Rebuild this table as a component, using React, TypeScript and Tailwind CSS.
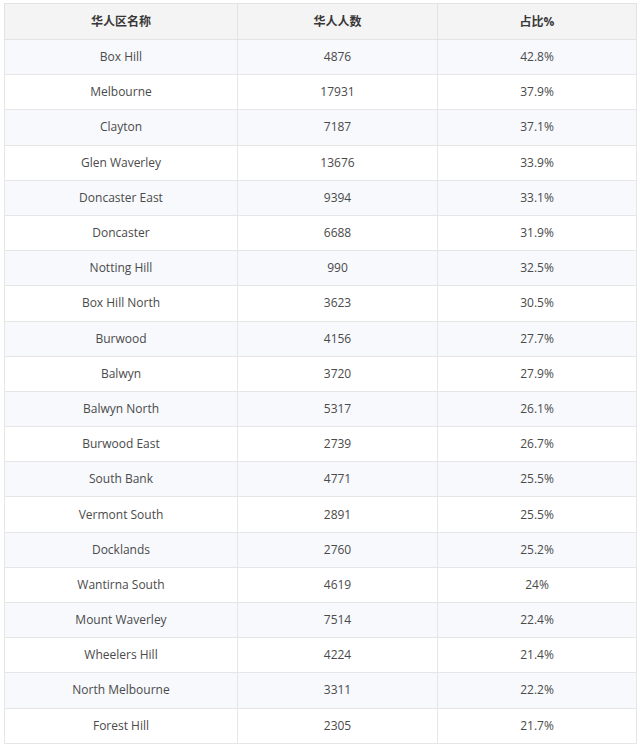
const rows: [string, string, string][] = [
  ['Box Hill', '4876', '42.8%'],
  ['Melbourne', '17931', '37.9%'],
  ['Clayton', '7187', '37.1%'],
  ['Glen Waverley', '13676', '33.9%'],
  ['Doncaster East', '9394', '33.1%'],
  ['Doncaster', '6688', '31.9%'],
  ['Notting Hill', '990', '32.5%'],
  ['Box Hill North', '3623', '30.5%'],
  ['Burwood', '4156', '27.7%'],
  ['Balwyn', '3720', '27.9%'],
  ['Balwyn North', '5317', '26.1%'],
  ['Burwood East', '2739', '26.7%'],
  ['South Bank', '4771', '25.5%'],
  ['Vermont South', '2891', '25.5%'],
  ['Docklands', '2760', '25.2%'],
  ['Wantirna South', '4619', '24%'],
  ['Mount Waverley', '7514', '22.4%'],
  ['Wheelers Hill', '4224', '21.4%'],
  ['North Melbourne', '3311', '22.2%'],
  ['Forest Hill', '2305', '21.7%'],
];

export default function App() {
  return (
    <div className="w-[640px] h-[747px] bg-white pt-[3px] pl-[4px] font-['Open_Sans','Noto_Sans_CJK_SC',sans-serif]">
      <table className="w-[632px] border-collapse table-fixed text-[12px] text-[#4a4a4a]">
        <colgroup>
          <col className="w-[233px]" />
          <col className="w-[200px]" />
          <col className="w-[199px]" />
        </colgroup>
        <thead>
          <tr className="h-[36px] bg-[#f4f4f4]">
            {['华人区名称', '华人人数', '占比%'].map((h) => (
              <th key={h} className="border border-[#e3e3e3] font-bold text-[#383838] text-center">
                {h}
              </th>
            ))}
          </tr>
        </thead>
        <tbody>
          {rows.map((r, i) => (
            <tr key={r[0]} className={i % 2 === 0 ? 'h-[35.2px] bg-[#f7f9fd]' : 'h-[35.2px] bg-white'}>
              {r.map((c, j) => (
                <td key={j} className="border border-[#e6e6e6] text-center">
                  {c}
                </td>
              ))}
            </tr>
          ))}
        </tbody>
      </table>
    </div>
  );
}
